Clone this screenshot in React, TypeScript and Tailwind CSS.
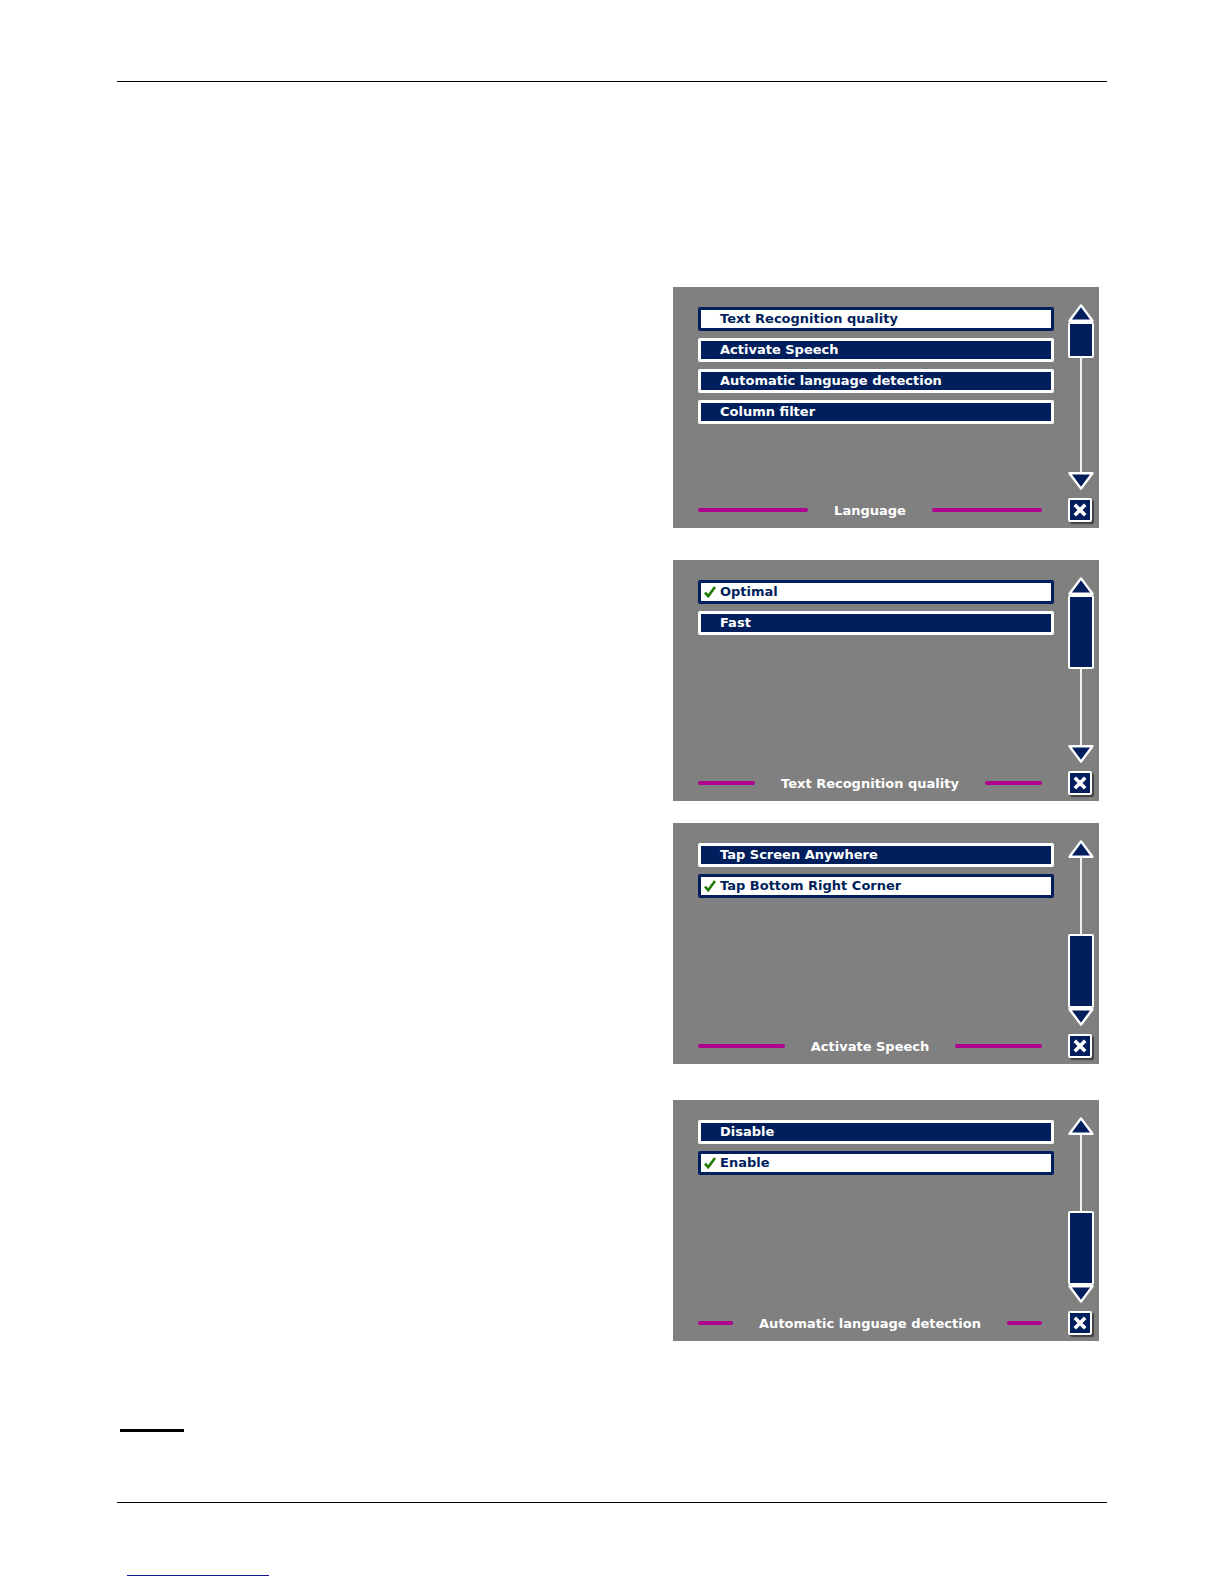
import { useState } from 'react';

type Thumb = {
  size: 'short' | 'long';
  at: 'start' | 'end';
};

type Menu = {
  title: string;
  items: string[];
  selected: number;
  checkable: boolean;
  thumb: Thumb;
  spacing: string;
};

const menus: Menu[] = [
  {
    title: 'Language',
    items: [
      'Text Recognition quality',
      'Activate Speech',
      'Automatic language detection',
      'Column filter',
    ],
    selected: 0,
    checkable: false,
    thumb: { size: 'short', at: 'start' },
    spacing: 'mt-[205px]',
  },
  {
    title: 'Text Recognition quality',
    items: ['Optimal', 'Fast'],
    selected: 0,
    checkable: true,
    thumb: { size: 'long', at: 'start' },
    spacing: 'mt-8',
  },
  {
    title: 'Activate Speech',
    items: ['Tap Screen Anywhere', 'Tap Bottom Right Corner'],
    selected: 1,
    checkable: true,
    thumb: { size: 'long', at: 'end' },
    spacing: 'mt-[22px]',
  },
  {
    title: 'Automatic language detection',
    items: ['Disable', 'Enable'],
    selected: 1,
    checkable: true,
    thumb: { size: 'long', at: 'end' },
    spacing: 'mt-9',
  },
];

function Arrow({ down = false }: { down?: boolean }) {
  return (
    <button aria-label={down ? 'Scroll down' : 'Scroll up'} className="block h-[18px] w-[26px]">
      <svg viewBox="0 0 26 18" className="block h-[18px] w-[26px]">
        <path
          d={down ? 'M1.5 1.2h23L13 16.6z' : 'M1.5 16.8h23L13 1.4z'}
          fill="#001f5c"
          stroke="#fff"
          strokeWidth="2.4"
          strokeLinejoin="round"
        />
      </svg>
    </button>
  );
}

function Scrollbar({ thumb }: { thumb: Thumb }) {
  return (
    <div className="flex flex-1 flex-col">
      <Arrow />
      <div
        className={`flex flex-1 items-center ${
          thumb.at === 'start' ? 'flex-col' : 'flex-col-reverse'
        }`}
      >
        <div
          className={`w-[26px] rounded-xs border-2 border-white bg-[#001f5c] ${
            thumb.size === 'short' ? 'h-9' : 'h-[74px]'
          }`}
        />
        <div className="w-0.5 flex-1 bg-[#f2f2f2]" />
      </div>
      <Arrow down />
    </div>
  );
}

function CloseButton() {
  return (
    <button
      aria-label="Close"
      className="flex size-6 items-center justify-center rounded-xs border-2 border-white bg-[#001f5c] shadow-[2px_2px_1px_#404040]"
    >
      <svg viewBox="0 0 14 14" className="size-3.5">
        <path d="M1.8 1.8l10.4 10.4M12.2 1.8l-10.4 10.4" stroke="#fff" strokeWidth="3.6" />
      </svg>
    </button>
  );
}

function MenuPanel({ menu }: { menu: Menu }) {
  const [selected, setSelected] = useState(menu.selected);

  return (
    <section
      className={`flex h-[241px] w-[426px] gap-3.5 bg-[#808080] pr-[5px] pl-[25px] font-bold ${menu.spacing}`}
    >
      <div className="flex flex-1 flex-col pt-5 pb-2">
        <div className="flex flex-1 flex-col gap-[7px]">
          {menu.items.map((item, i) => (
            <button
              key={item}
              onClick={() => setSelected(i)}
              aria-pressed={i === selected}
              className={`flex h-6 items-center rounded-xs border-3 text-left ${
                i === selected
                  ? 'border-[#001f5c] bg-white text-[#001f5c]'
                  : 'border-white bg-[#001f5c] text-white'
              }`}
            >
              <span className="flex w-[19px] pl-[3px]">
                {menu.checkable && i === selected && (
                  <svg viewBox="0 0 12 12" className="size-3">
                    <path
                      d="M1 6.6l3.2 3.6L11 1"
                      fill="none"
                      stroke="#1f7a00"
                      strokeWidth="2.6"
                    />
                  </svg>
                )}
              </span>
              {item}
            </button>
          ))}
        </div>

        <div className="flex h-5 items-center gap-[26px] pr-3">
          <div className="h-1 flex-1 rounded-full bg-[#b0008e]" />
          <h2 className="pt-0.5 text-white">{menu.title}</h2>
          <div className="h-1 flex-1 rounded-full bg-[#b0008e]" />
        </div>
      </div>

      <div className="flex flex-col gap-2 pt-[17px] pb-1.5">
        <Scrollbar thumb={menu.thumb} />
        <CloseButton />
      </div>
    </section>
  );
}

export default function App() {
  return (
    <div className="min-h-screen bg-white px-[117px] pt-[81px] pb-2 font-['DejaVu_Sans',sans-serif] text-[13px] leading-5">
      <main className="flex flex-col items-end border-y border-black pr-2 pb-[70px]">
        {menus.map((menu) => (
          <MenuPanel key={menu.title} menu={menu} />
        ))}
        <hr className="mt-[88px] ml-[3px] w-16 self-start border-t-3 border-black" />
      </main>
      <footer className="pt-[72px] pl-2.5">
        <div className="h-px w-[142px] bg-[#14149a]" />
      </footer>
    </div>
  );
}
